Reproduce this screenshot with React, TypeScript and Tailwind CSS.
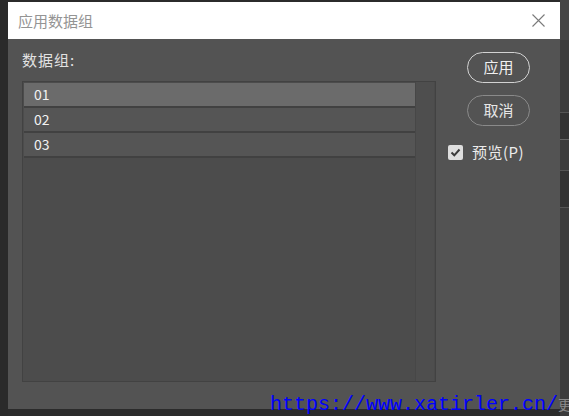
import React from "react";

const font = "font-['Noto_Sans_CJK_SC','Noto_Sans',sans-serif]";

export default function App() {
  return (
    <div className={`relative w-[569px] h-[416px] overflow-hidden bg-[#2b2b2b] flex ${font}`}>
      <div className="w-[8px] shrink-0 bg-[#2a2a2a]" />
      <div className="w-[552px] shrink-0 mt-[2px] h-[407px] flex flex-col bg-[#535353]">
        <div className="h-[37px] shrink-0 bg-white flex items-center justify-between pl-[10px] pr-[15px]">
          <span className="text-[15px] leading-[20px] text-[#949494]">应用数据组</span>
          <svg width="13" height="13" viewBox="0 0 13 13">
            <path d="M0.5 0.5 L12.5 12.5 M12.5 0.5 L0.5 12.5" stroke="#7a7a7a" strokeWidth="1.1" fill="none" />
          </svg>
        </div>
        <div className="flex-1 flex pl-[14px]">
          <div className="flex flex-col">
            <div className="pt-[11px] text-[15px] leading-[20px] text-[#e2e2e2] tracking-[1px]">数据组:</div>
            <div className="mt-[11px] w-[414px] h-[301px] border border-[#424242] bg-[#4c4c4c] flex">
              <div className="flex-1 flex flex-col pl-[1px] pt-[1px] border-r border-[#474747]">
                <div className="h-[25px] border-b-2 border-[#414141] bg-[#6b6b6b] flex items-center pl-[10px] text-[14px] text-[#f2f2f2]">01</div>
                <div className="h-[25px] border-b-2 border-[#414141] bg-[#555555] flex items-center pl-[10px] text-[14px] text-[#f2f2f2]">02</div>
                <div className="h-[25px] border-b-2 border-[#414141] bg-[#555555] flex items-center pl-[10px] text-[14px] text-[#f2f2f2]">03</div>
              </div>
              <div className="w-[19px] bg-[#4e4e4e] border-r border-[#4a4a4a]" />
            </div>
          </div>
          <div className="ml-[12px] flex flex-col pt-[13px]">
            <div className="ml-[19px] w-[63px] h-[31px] rounded-full border-[1.5px] border-[#d2d2d2] flex items-center justify-center text-[15px] text-[#f0f0f0]">应用</div>
            <div className="ml-[19px] mt-[12px] w-[63px] h-[31px] rounded-full border-[1.5px] border-[#8a8a8a] flex items-center justify-center text-[15px] text-[#e6e6e6]">取消</div>
            <div className="mt-[16px] flex items-center gap-[9px]">
              <div className="w-[15px] h-[15px] rounded-[2px] bg-[#dedede] flex items-center justify-center">
                <svg width="11" height="11" viewBox="0 0 11 11">
                  <path d="M1.5 5.5 L4.3 8.3 L9.5 2.5" stroke="#3a3a3a" strokeWidth="2" fill="none" />
                </svg>
              </div>
              <span className="text-[15px] leading-[20px] text-[#ececec] tracking-[0.5px]">预览(P)</span>
            </div>
          </div>
        </div>
      </div>
      <div className="flex-1 bg-[#3b3b3b] flex flex-col">
        <div className="h-[40px] bg-[#454545]" />
        <div className="h-[72px]" />
        <div className="h-[1px] bg-[#555]" />
        <div className="h-[26px] bg-[#333]" />
        <div className="h-[1px] bg-[#666]" />
        <div className="h-[30px]" />
        <div className="h-[1px] bg-[#555]" />
        <div className="h-[36px] bg-[#333]" />
        <div className="h-[1px] bg-[#555]" />
        <div className="flex-1" />
      </div>
      <div className="absolute left-[270px] top-[392px] text-[20px] leading-[24px] text-[#0000ff] font-['Liberation_Mono',monospace] whitespace-nowrap">
        https://www.xatirler.cn/<span className={`text-[#8a8a8a] text-[14px] ${font}`}>更</span>
      </div>
    </div>
  );
}
